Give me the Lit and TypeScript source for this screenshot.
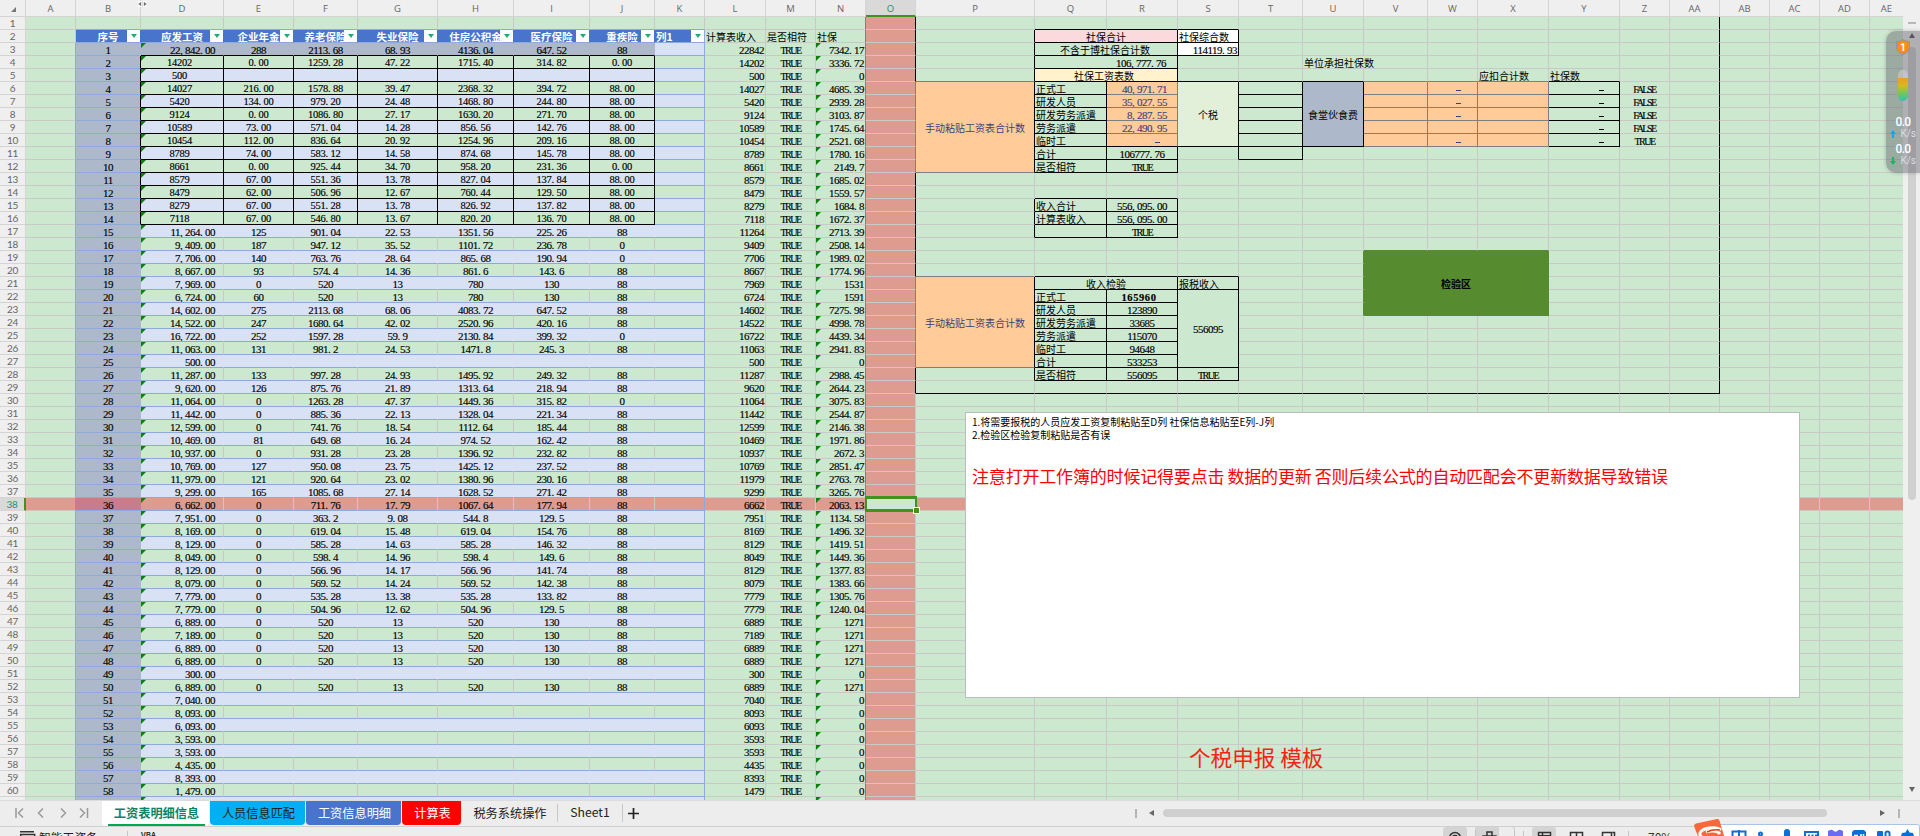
import { LitElement, html, css, svg, nothing } from 'lit';
import { customElement } from 'lit/decorators.js';

const COLS: [string, number][] = [
  ['A', 50], ['B', 65], ['D', 83], ['E', 70], ['F', 64], ['G', 80], ['H', 76], ['I', 76], ['J', 65], ['K', 50],
  ['L', 61], ['M', 50], ['N', 50], ['O', 50], ['P', 119], ['Q', 72], ['R', 71], ['S', 61], ['T', 64], ['U', 61],
  ['V', 64], ['W', 50], ['X', 71], ['Y', 71], ['Z', 50], ['AA', 50], ['AB', 50], ['AC', 50], ['AD', 50], ['AE', 34],
];
const NAMES = COLS.map((c) => c[0]);
const ci = (n: string) => NAMES.indexOf(n);
const LAST_ROW = 61;

// D | E F G H I J | N
const PAYROLL = `22,842.00|288 2113.68 68.93 4136.04 647.52 88|7342.17
14202|0.00 1259.28 47.22 1715.40 314.82 0.00|3336.72
500||0
14027|216.00 1578.88 39.47 2368.32 394.72 88.00|4685.39
5420|134.00 979.20 24.48 1468.80 244.80 88.00|2939.28
9124|0.00 1086.80 27.17 1630.20 271.70 88.00|3103.87
10589|73.00 571.04 14.28 856.56 142.76 88.00|1745.64
10454|112.00 836.64 20.92 1254.96 209.16 88.00|2521.68
8789|74.00 583.12 14.58 874.68 145.78 88.00|1780.16
8661|0.00 925.44 34.70 958.20 231.36 0.00|2149.7
8579|67.00 551.36 13.78 827.04 137.84 88.00|1685.02
8479|62.00 506.96 12.67 760.44 129.50 88.00|1559.57
8279|67.00 551.28 13.78 826.92 137.82 88.00|1684.8
7118|67.00 546.80 13.67 820.20 136.70 88.00|1672.37
11,264.00|125 901.04 22.53 1351.56 225.26 88|2713.39
9,409.00|187 947.12 35.52 1101.72 236.78 0|2508.14
7,706.00|140 763.76 28.64 865.68 190.94 0|1989.02
8,667.00|93 574.4 14.36 861.6 143.6 88|1774.96
7,969.00|0 520 13 780 130 88|1531
6,724.00|60 520 13 780 130 88|1591
14,602.00|275 2113.68 68.06 4083.72 647.52 88|7275.98
14,522.00|247 1680.64 42.02 2520.96 420.16 88|4998.78
16,722.00|252 1597.28 59.9 2130.84 399.32 0|4439.34
11,063.00|131 981.2 24.53 1471.8 245.3 88|2941.83
500.00||0
11,287.00|133 997.28 24.93 1495.92 249.32 88|2988.45
9,620.00|126 875.76 21.89 1313.64 218.94 88|2644.23
11,064.00|0 1263.28 47.37 1449.36 315.82 0|3075.83
11,442.00|0 885.36 22.13 1328.04 221.34 88|2544.87
12,599.00|0 741.76 18.54 1112.64 185.44 88|2146.38
10,469.00|81 649.68 16.24 974.52 162.42 88|1971.86
10,937.00|0 931.28 23.28 1396.92 232.82 88|2672.3
10,769.00|127 950.08 23.75 1425.12 237.52 88|2851.47
11,979.00|121 920.64 23.02 1380.96 230.16 88|2763.78
9,299.00|165 1085.68 27.14 1628.52 271.42 88|3265.76
6,662.00|0 711.76 17.79 1067.64 177.94 88|2063.13
7,951.00|0 363.2 9.08 544.8 129.5 88|1134.58
8,169.00|0 619.04 15.48 619.04 154.76 88|1496.32
8,129.00|0 585.28 14.63 585.28 146.32 88|1419.51
8,049.00|0 598.4 14.96 598.4 149.6 88|1449.36
8,129.00|0 566.96 14.17 566.96 141.74 88|1377.83
8,079.00|0 569.52 14.24 569.52 142.38 88|1383.66
7,779.00|0 535.28 13.38 535.28 133.82 88|1305.76
7,779.00|0 504.96 12.62 504.96 129.5 88|1240.04
6,889.00|0 520 13 520 130 88|1271
7,189.00|0 520 13 520 130 88|1271
6,889.00|0 520 13 520 130 88|1271
6,889.00|0 520 13 520 130 88|1271
300.00||0
6,889.00|0 520 13 520 130 88|1271
7,040.00||0
8,093.00||0
6,093.00||0
3,593.00||0
3,593.00||0
4,435.00||0
8,393.00||0
1,479.00||0`.split('\n').map((l) => l.split('|'));

interface Cell {
  bg: string; r: string; b: string; text?: string; align?: string; color?: string;
  cls?: string; rs?: number; cs?: number; tri?: boolean; filter?: boolean; hidden?: boolean; indent?: number;
}

const GREEN = '#cce8cf', GRID = '#c9c9c9', LINE = '#8ea9db', BAND = '#d9e1f4', STEEL = '#adb9ca';
const RED = '#dd9c8f', ORANGE = '#ffcc99', GRAY = '#7f7f7f', BLACK = '#000', PLUM = '#3f3f76';

function buildSheet(): Cell[][] {
  const g: Cell[][] = [];
  for (let r = 0; r <= LAST_ROW; r++) g.push(COLS.map(() => ({ bg: GREEN, r: GRID, b: GRID })));
  const at = (n: string, r: number) => g[r][ci(n)];
  const span = (a: string, b: string) => NAMES.slice(ci(a), ci(b) + 1);
  const put = (n: string, r: number, text: string, o: Partial<Cell> = {}) => Object.assign(at(n, r), { text, ...o });
  const frame = (a: string, r1: number, b: string, r2: number, color: string) => {
    for (let r = r1 - 1; r <= r2; r++)
      for (let c = ci(a) - 1; c <= ci(b); c++) {
        if (r >= r1) g[r][c].r = color;
        if (c >= ci(a)) g[r][c].b = color;
      }
  };
  const merge = (a: string, r1: number, b: string, r2: number) => {
    const end = at(b, r2);
    for (let r = r1; r <= r2; r++) for (const n of span(a, b)) at(n, r).hidden = true;
    Object.assign(at(a, r1), { hidden: false, rs: r2 - r1 + 1, cs: ci(b) - ci(a) + 1, r: end.r, b: end.b });
  };

  // payroll table
  const heads = ['序号', '应发工资', '企业年金', '养老保险', '失业保险', '住房公积金', '医疗保险', '重疾险', '列1'];
  span('B', 'K').forEach((n, i) => {
    put(n, 2, heads[i], { bg: '#4874cb', r: '#4874cb', b: LINE, color: '#fff', cls: 'head', filter: true, align: n === 'K' ? 'left' : 'center' });
    at(n, 1).b = LINE;
  });
  at('K', 2).r = LINE;
  for (let r = 3; r <= LAST_ROW; r++) {
    const odd = r % 2 === 1;
    for (const n of span('B', 'K')) {
      const c = at(n, r);
      c.bg = n === 'B' || (r === 3 && n !== 'K') ? STEEL : odd ? BAND : GREEN;
      c.b = LINE;
      c.r = n === 'K' ? LINE : n === 'B' || odd ? c.bg : GRID;
    }
    at('A', r).r = LINE;
    at('D', r).tri = at('N', r).tri = true;
    const d = PAYROLL[r - 3];
    if (!d) continue;
    const pasted = r >= 4 && r <= 16;
    put('B', r, String(r - 2), { align: 'center' });
    put('D', r, d[0], pasted ? { align: 'center', cls: 'small', indent: 5 } : { align: 'right', indent: 8 });
    if (d[1]) d[1].split(' ').forEach((v, i) => put(NAMES[ci('E') + i], r, v, { align: 'center', cls: pasted ? 'small' : '' }));
    put('L', r, d[0].replace(',', '').replace('.00', ''), { align: 'right', indent: 1 });
    put('M', r, 'TRUE', { align: 'center' });
    put('N', r, d[2], { align: 'right', indent: 1 });
  }
  frame('D', 4, 'J', 16, BLACK);
  put('L', 2, '计算表收入', { align: 'left' });
  put('M', 2, '是否相符', { align: 'left' });
  put('N', 2, '社保', { align: 'left' });

  // highlighted row and column
  for (const c of g[38]) c.bg = RED;
  Object.assign(at('B', 38), { bg: '#c87c8c', r: '#c87c8c' });
  at('A', 38).r = '#c87c8c';
  for (let r = 1; r <= LAST_ROW; r++) {
    Object.assign(at('O', r), { bg: RED, r: GRID });
    at('N', r).r = '#36a873';
  }
  at('O', 38).bg = GREEN;

  // outer border of the check area
  for (let r = 1; r <= 29; r++) at('O', r).r = at('AA', r).r = BLACK;
  for (const n of span('P', 'AA')) at(n, 29).b = BLACK;

  // social insurance totals
  frame('P', 6, 'P', 12, GRAY);
  frame('Q', 2, 'R', 5, BLACK);
  frame('R', 6, 'R', 10, GRAY);
  frame('Q', 6, 'Q', 12, BLACK);
  frame('R', 11, 'R', 12, BLACK);
  frame('S', 2, 'S', 3, BLACK);
  for (let r = 6; r <= 10; r++) at('R', r).r = GRAY;
  for (let r = 6; r <= 12; r++) if (r !== 12) at('P', r).b = ORANGE;
  at('R', 5).b = at('S', 5).b = BLACK;
  at('S', 10).b = BLACK;
  frame('V', 6, 'X', 10, GRAY);
  frame('T', 6, 'T', 11, BLACK);
  frame('U', 6, 'U', 10, BLACK);
  frame('Y', 6, 'Y', 10, BLACK);
  for (let r = 6; r <= 10; r++) at('X', r).r = GRAY;
  put('Q', 2, '社保合计', { bg: '#fadadd', align: 'center' });
  put('Q', 3, '不含于博社保合计数', { align: 'center', indent: 2 });
  put('Q', 4, '106,777.76', { align: 'right', indent: 11 });
  put('Q', 5, '社保工资表数', { bg: '#fff2cc', align: 'center', indent: 4 });
  for (let r = 2; r <= 5; r++) merge('Q', r, 'R', r);
  put('S', 2, '社保综合数', { bg: '#fff', align: 'left' });
  put('S', 3, '114119.93', { bg: '#fff', align: 'right', indent: 1 });
  const kinds = ['正式工', '研发人员', '研发劳务派遣', '劳务派遣', '临时工', '合计', '是否相符'];
  kinds.forEach((k, i) => {
    put('Q', 6 + i, k, { align: 'left' });
    put('Q', 22 + i, k, { align: 'left' });
  });
  ['40,971.71', '35,027.55', '8,287.55', '22,490.95', '-'].forEach((v, i) =>
    put('R', 6 + i, v, { bg: ORANGE, color: PLUM, align: 'right', indent: v === '-' ? 17 : 10 }));
  put('R', 11, '106777.76', { align: 'center' });
  put('R', 12, 'TRUE', { align: 'center' });
  put('P', 6, '手动粘贴工资表合计数', { bg: ORANGE, color: PLUM, align: 'center', cls: 'mid' });
  merge('P', 6, 'P', 12);
  put('S', 6, '个税', { bg: '#e2f0d9', align: 'center', cls: 'mid' });
  merge('S', 6, 'S', 10);
  put('U', 6, '食堂伙食费', { bg: STEEL, align: 'center', cls: 'mid' });
  merge('U', 6, 'U', 10);
  put('U', 4, '单位承担社保数', { align: 'left', cls: 'spill', r: GREEN });
  put('X', 5, '应扣合计数', { align: 'left' });
  put('Y', 5, '社保数', { align: 'left' });
  for (let r = 6; r <= 10; r++) {
    for (const n of span('V', 'X')) at(n, r).bg = ORANGE;
    if (r !== 9) put('W', r, '-', { align: 'right', indent: 16, color: PLUM });
    put('Y', r, '-', { align: 'right', indent: 15 });
    put('Z', r, r === 10 ? 'TRUE' : 'FALSE', { align: 'center' });
  }

  // income totals
  frame('Q', 15, 'R', 17, BLACK);
  put('Q', 15, '收入合计', { align: 'left' });
  put('Q', 16, '计算表收入', { align: 'left' });
  put('R', 15, '556,095.00', { align: 'center' });
  put('R', 16, '556,095.00', { align: 'center' });
  put('R', 17, 'TRUE', { align: 'center' });

  // income check
  frame('P', 21, 'P', 27, GRAY);
  frame('Q', 21, 'S', 28, BLACK);
  put('P', 21, '手动粘贴工资表合计数', { bg: ORANGE, color: PLUM, align: 'center', cls: 'mid' });
  merge('P', 21, 'P', 27);
  put('Q', 21, '收入检验', { align: 'center' });
  merge('Q', 21, 'R', 21);
  ['165960', '123890', '33685', '115070', '94648', '533253', '556095'].forEach((v, i) =>
    put('R', 22 + i, v, { align: 'center', cls: i === 0 ? 'strong wide' : '', indent: i === 0 ? 6 : 0 }));
  put('S', 21, '报税收入', { align: 'left' });
  put('S', 22, '556095', { align: 'center', cls: 'mid' });
  merge('S', 22, 'S', 27);
  put('S', 28, 'TRUE', { align: 'center' });

  const zone = '#568c2f';
  for (const n of span('V', 'X')) at(n, 18).b = zone;
  for (let r = 19; r <= 23; r++) at('U', r).r = zone;
  Object.assign(at('X', 23), { r: zone, b: zone });
  put('V', 19, '检验区', { bg: zone, align: 'center', cls: 'mid strong' });
  merge('V', 19, 'X', 23);
  return g;
}

const SHEET = buildSheet();

function glyphs(t: string) {
  if (/^(TRUE|FALSE)$/.test(t)) return html`<span class="bool">${t}</span>`;
  if (t === '-') return html`<span class="dash"></span>`;
  if (/^[\d.,]+$/.test(t))
    return html`<span class="num">${t.split(/([.,])/).map((p) => (/[.,]/.test(p) ? html`<i>${p}</i>` : p))}</span>`;
  return html`<span class="cjk">${t}</span>`;
}

@customElement('sheet-grid')
class SheetGrid extends LitElement {
  static styles = css`
    :host { display: block; width: 1903px; height: 800px; overflow: hidden; position: relative; background: #cce8cf; }
    .grid { display: grid; grid-template-rows: 17px; grid-auto-rows: 13px; font-family: "Liberation Serif", "Noto Sans CJK SC", serif; color: #000; }
    .cell { box-sizing: border-box; border-right: 1px solid; border-bottom: 1px solid; display: flex; overflow: hidden; position: relative; white-space: nowrap; line-height: 14px; min-width: 0; }
    .left { justify-content: flex-start; padding-left: 1px; }
    .right { justify-content: flex-end; }
    .center { justify-content: center; }
    .mid { align-items: center; z-index: 1; padding-top: 2px; }
    .spill { overflow: visible; z-index: 2; }
    .num { font-size: 11px; letter-spacing: -0.5px; line-height: 15px; -webkit-text-stroke: 0.15px currentColor; }
    .num i { font-style: normal; display: inline-block; width: 5px; letter-spacing: 0; }
    .small .num { font-size: 10.5px; letter-spacing: -0.25px; line-height: 14px; }
    .bool { font-size: 10px; letter-spacing: -1.5px; line-height: 15px; -webkit-text-stroke: 0.15px currentColor; }
    .dash { width: 5px; height: 1px; margin-top: 8px; background: currentColor; }
    .cjk { font: 10px/14px "Noto Sans CJK SC", sans-serif; }
    .head .cjk { font-size: 10.5px; font-weight: 700; }
    .strong .num, .strong .cjk { font-weight: 700; letter-spacing: 0; }
    .wide .num { font-size: 10.5px; letter-spacing: 0.6px; }
    .tri::before { content: ""; position: absolute; left: 0; top: 0; border-style: solid; border-width: 5px 5px 0 0; border-color: #0a8011 transparent transparent; }
    .filter { position: absolute; right: 0; top: 0; width: 13px; height: 12px; background: #fff; display: grid; place-items: center; }
    .filter::after { content: ""; border-style: solid; border-width: 4px 3px 0; border-color: #1fae70 transparent transparent; }
    .colh, .rowh { box-sizing: border-box; background: #efefef; color: #666; font: 10px/18px "Open Sans", sans-serif; text-align: center; border-right: 1px solid #d4d4d4; border-bottom: 1px solid #d4d4d4; }
    .colh { font-size: 9.5px; }
    .rowh { font: 10px/13px Lato, sans-serif; overflow: hidden; letter-spacing: -0.4px; }
    .corner { display: flex; justify-content: flex-end; align-items: flex-end; padding: 0 9px 4px 0; }
    .corner::after { content: ""; border-style: solid; border-width: 0 0 5px 5px; border-color: transparent transparent #777; }
    .colh.on { background: #d9d9d9; color: #1d8f6b; border-bottom: 2px solid #43921f; }
    .rowh.on { background: #d9d9d9; color: #1d8f6b; border-right: 2px solid #43921f; }
    .unhide { position: absolute; left: 138px; top: 1px; width: 9px; height: 6px; background: #fff; border-radius: 1px; z-index: 3; }
    .unhide svg { display: block; }
    .cursor { position: absolute; left: 865px; top: 496px; width: 52px; height: 16px; box-sizing: border-box; border: 3px solid #43921f; border-width: 3px 2px; z-index: 3; }
    .cursor::after { content: ""; position: absolute; right: -4px; bottom: -4px; width: 5px; height: 5px; background: #43921f; outline: 1px solid #fff; }
    .note { position: absolute; left: 965px; top: 412px; width: 835px; height: 286px; box-sizing: border-box; border: 1px solid #b9bdbb; background: #fff; z-index: 4; padding: 2px 6px; color: #000; font: 10px/13px "Noto Sans CJK SC", sans-serif; white-space: nowrap; }
    .note p { margin: 0; }
    .note .warn { color: #f00; font-size: 17px; line-height: 24px; margin-top: 23px; word-spacing: -0.5px; letter-spacing: -0.18px; }
    .label { position: absolute; left: 1189px; top: 742px; font: 21.6px/30px "Noto Sans CJK SC", sans-serif; color: #f5230f; z-index: 4; white-space: nowrap; }
  `;
  render() {
    const tpl = '26px ' + COLS.map((c) => c[1] + 'px').join(' ');
    return html`
      <div class="grid" style="grid-template-columns:${tpl}">
        <div class="colh corner"></div>
        ${COLS.map(([n]) => html`<div class="colh ${n === 'O' ? 'on' : ''}">${n}</div>`)}
        ${SHEET.slice(1).map((row, i) => html`
          <div class="rowh ${i === 37 ? 'on' : ''}" style="grid-area:${i + 2}/1">${i + 1}</div>
          ${row.map((c, j) => c.hidden ? nothing : html`<div
            class="cell ${c.align ?? ''} ${c.cls ?? ''} ${c.tri ? 'tri' : ''}"
            style="grid-area:${i + 2}/${j + 2}/span ${c.rs ?? 1}/span ${c.cs ?? 1};background:${c.bg};border-right-color:${c.r};border-bottom-color:${c.b};${c.color ? `color:${c.color};` : ''}${c.indent ? `padding-right:${c.indent}px` : ''}"
          >${c.text ? glyphs(c.text) : nothing}${c.filter ? html`<span class="filter"></span>` : nothing}</div>`)}`)}
      </div>
      <div class="unhide"><svg width="9" height="6"><path d="M3 1v4L.5 3zM6 1v4l2.5-2zM4.5 0v6" fill="#666" stroke="#999" stroke-width=".4"/></svg></div>
      <div class="cursor"></div>
      <div class="note">
        <p>1.将需要报税的人员应发工资复制粘贴至D列 社保信息粘贴至E列-J列</p>
        <p>2.检验区检验复制粘贴是否有误</p>
        <p class="warn">注意打开工作簿的时候记得要点击 数据的更新 否则后续公式的自动匹配会不更新数据导致错误</p>
      </div>
      <div class="label">个税申报 模板</div>`;
  }
}

@customElement('net-widget')
class NetWidget extends LitElement {
  static styles = css`
    :host { position: absolute; left: 1886px; top: 31px; width: 34px; height: 142px; box-sizing: border-box; background: rgba(90, 90, 102, 0.43); border-radius: 10px 0 0 10px; z-index: 10; box-shadow: 0 0 4px rgba(0, 0, 0, 0.2); display: flex; flex-direction: column; align-items: center; padding-top: 8px; font-family: Roboto, sans-serif; color: #fff; overflow: hidden; }
    .pill { flex: none; width: 10px; height: 31px; border-radius: 5px; margin: 15px 0 14px; background: linear-gradient(rgba(255,255,255,.25) 8px, #f09a28 8px, #d8b820 16px, #7cc850 22px, #2fc0b8 31px); }
    .v { font-size: 12px; line-height: 14px; font-weight: 500; letter-spacing: -0.6px; }
    .u { font-size: 10px; line-height: 9px; color: #dcdce2; display: flex; gap: 4px; align-items: center; margin-bottom: 4px; align-self: flex-end; padding-right: 4px; }
    svg { display: block; flex: none; }
  `;
  render() {
    const arrow = (d: string, f: string) => svg`<svg width="6" height="8"><path d=${d} fill=${f}/></svg>`;
    return html`
      <svg width="14" height="16"><path d="M7 .6c2 1.3 4 1.8 6.3 1.9v6c0 3.4-3 5.6-6.3 7C3.7 14.1.7 11.9.7 8.5v-6C3 2.4 5 1.9 7 .6z" fill="#fb8c16" stroke="#8b8fb0"/><text x="7" y="12" text-anchor="middle" font-size="10.5" font-weight="700" fill="#fff">1</text></svg>
      <div class="pill"></div>
      <div class="v">0.0</div>
      <div class="u">${arrow('M3 0l3 4H4v4H2V4H0z', '#12a5f4')}<span>K/s</span></div>
      <div class="v">0.0</div>
      <div class="u">${arrow('M3 8l3-4H4V0H2v4H0z', '#13b866')}<span>K/s</span></div>`;
  }
}

@customElement('sheet-tabs')
class SheetTabs extends LitElement {
  static styles = css`
    :host { display: flex; box-sizing: border-box; height: 27px; background: #ededed; border-top: 1px solid #dcdcdc; border-bottom: 1px solid #cfcfcf; font: 12px/22px "Noto Sans CJK SC", sans-serif; color: #222; align-items: flex-start; }
    .nav { width: 102px; height: 25px; box-sizing: border-box; padding: 6px 0 0 14px; flex: none; }
    .nav svg { display: block; }
    .tab { box-sizing: border-box; height: 24px; text-align: center; border-radius: 0 0 4px 4px; white-space: nowrap; padding: 1px 0 0 2px; flex: none; font-size: 12.2px; }
    .active { width: 107px; margin-right: 1px; background: #fff; color: #0c8368; font-weight: 700; height: 25px; display: flex; flex-direction: column; align-items: center; }
    .active::after { content: ""; width: 97px; height: 2px; background: #00a651; }
    .cyan { width: 95px; margin-right: 1px; background: #00b0f0; }
    .blue { width: 95px; margin-right: 1px; background: #4874cb; color: #fff; }
    .red { width: 59px; background: #f00; color: #fff; }
    .plain { width: 96px; }
    .s1 { width: 66px; border: solid #c8c8c8; border-width: 0 1px; border-radius: 0; height: 18px; line-height: 17px; margin-top: 3px; padding: 0; }
    .plus { margin: 7px 0 0 5px; flex: none; }
    .hbar { margin: 7px 0 0 496px; display: flex; align-items: center; height: 10px; }
    .tick { width: 2px; height: 9px; background: #b5b5b5; }
    .lt { border: solid transparent; border-width: 3px 5px 3px 0; border-right-color: #666; margin: 0 9px 0 12px; }
    .track { width: 664px; height: 8px; border-radius: 4px; background: #cfcfcf; }
    .rt { border: solid transparent; border-width: 3px 0 3px 5px; border-left-color: #666; margin: 0 13px 0 53px; }
  `;
  render() {
    return html`
      <div class="nav"><svg width="76" height="12" fill="none" stroke="#999" stroke-width="1.5"><path d="M2 1v10M9 1.5L4.5 6 9 10.5M29 1.5L24.5 6l4.5 4.5M47 1.5L51.5 6 47 10.5M66 1.5L70.5 6 66 10.5M73.5 1v10"/></svg></div>
      <div class="tab active">工资表明细信息</div>
      <div class="tab cyan">人员信息匹配</div>
      <div class="tab blue">工资信息明细</div>
      <div class="tab red">计算表</div>
      <div class="tab plain">税务系统操作</div>
      <div class="tab s1">Sheet1</div>
      <svg class="plus" width="11" height="11"><path d="M5.5 0v11M0 5.5h11" stroke="#222" stroke-width="1.7"/></svg>
      <div class="hbar"><span class="tick"></span><span class="lt"></span><span class="track"></span><span class="rt"></span><span class="tick"></span></div>`;
  }
}

@customElement('ime-bar')
class ImeBar extends LitElement {
  static styles = css`
    :host { position: absolute; left: 1690px; top: 818px; width: 230px; height: 18px; overflow: hidden; z-index: 5; }
    svg { display: block; }
  `;
  render() {
    return html`<svg width="230" height="18" viewBox="1690 818 230 18" fill="none" stroke="#0a6fd6" stroke-width="2">
      <rect x="1700" y="824.5" width="219.5" height="30" rx="2" fill="#fff" stroke="#a9c4e6" stroke-width="1"/>
      <path d="M1694 826q0-2 2-2.5l21-4.5q2-.4 2.5 1.5l5 17h-26z" fill="#f9683a" stroke="none"/>
      <path d="M1721 830c-5-4-19-2.5-21 3-.8 3 2 5 6 5M1706 832c5-2 12-1 14 2" stroke="#fff" stroke-width="3"/>
      <path d="M1707 832q6-3 13-2" stroke="#e0401a" stroke-width="1.5"/>
      <path d="M1732.5 836v-4.5h13v4.500M1739 830v7"/>
      <circle cx="1760.5" cy="834" r="1.5"/>
      <path d="M1787 838v-6" stroke-width="6" stroke-linecap="round"/>
      <path d="M1805 837v-5h13v5"/>
      <path d="M1808 835.5h9" stroke-dasharray="2 1.5"/>
      <path d="M1828 831q4-2 4.5-1 3 3.5 6 0 .5-1 4.5 1v7h-15z" fill="#6a6cf5" stroke="none"/>
      <path d="M1852 838v-6l2-2h10l2 2v6z" fill="#0a6fd6" stroke="none"/><path d="M1854 835.500h4M1861 834v3M1863.500 834v3" stroke="#fff" stroke-width="1.500"/>
      <rect x="1877" y="831" width="6" height="6" rx="1" fill="#0a6fd6" stroke="none"/><rect x="1885.5" y="831.5" width="4" height="6" rx="2"/>
      <path d="M1901 836l1-3 3.500-.5 2-3.500 2 3.500 3.500.5 1 3z" fill="#0a6fd6" stroke="none"/>
    </svg>`;
  }
}

@customElement('app-root')
class AppRoot extends LitElement {
  static styles = css`
    :host { display: flex; flex-direction: column; width: 1920px; height: 836px; overflow: hidden; position: relative; background: #ededed; }
    .main { display: flex; height: 800px; }
    .vbar { width: 17px; background: #efefef; display: flex; flex-direction: column; align-items: center; }
    .split { width: 8px; height: 2px; background: #b8b8b8; margin-top: 22px; }
    .up { border: solid transparent; border-width: 0 3px 5px; border-bottom-color: #555; margin: 9px 0; }
    .thumb { width: 8px; height: 453px; background: #d0d0d0; border-radius: 4px; }
    .down { border: solid transparent; border-width: 5px 3px 0; border-top-color: #666; margin-top: auto; margin-bottom: 8px; }
    .status { height: 9px; overflow: hidden; background: #ededed; }
    .status svg { display: block; }
    text { font-family: "Noto Sans CJK SC", sans-serif; }
  `;
  render() {
    return html`
      <div class="main">
        <sheet-grid></sheet-grid>
        <div class="vbar"><span class="split"></span><span class="up"></span><span class="thumb"></span><span class="down"></span></div>
      </div>
      <sheet-tabs></sheet-tabs>
      <div class="status">
        <svg width="1920" height="9" viewBox="0 827 1920 9" fill="none" stroke="#333" stroke-width="1.5">
          <path d="M20 831.8h14M20.700 840v-5.500h14v5.500M25 836.500v2M29 836.500v2" />
          <text x="39" y="842" font-size="11.8" fill="#222" stroke="none">智能工资条</text>
          <path d="M127.5 831v6M1523.5 831v6M1628.5 831v6" stroke="#c4c4c4" stroke-width="1"/>
          <text x="141" y="838" font-size="8" font-weight="700" textLength="15" lengthAdjust="spacingAndGlyphs" fill="#333" stroke="none">VBA</text>
          <rect x="1443" y="827" width="24" height="14" rx="3" fill="#d4d4d4" stroke="none"/>
          <circle cx="1455" cy="838" r="5.5"/><circle cx="1455" cy="838" r="2.5"/>
          <rect x="1475.5" y="826.5" width="39" height="14" rx="3" stroke="#c4c4c4" stroke-width="1"/>
          <rect x="1476" y="827" width="23" height="13" fill="#d4d4d4" stroke="none"/>
          <path d="M1487 836v-4h5v4M1483 840v-4h13v4"/>
          <rect x="1532" y="827" width="24" height="14" rx="3" fill="#d4d4d4" stroke="none"/>
          <path d="M1538.5 840v-7.500h12v7.500M1542.500 833v8M1538.500 835.800h12M1570.500 840v-7.500h12v7.500M1576.500 833v8M1602.500 840v-7.500h9v7.500M1614.500 840v-7.500h-2"/>
          <text x="1648" y="842" font-size="12" fill="#333" stroke="none">70%</text>
        </svg>
      </div>
      <ime-bar></ime-bar>
      <net-widget></net-widget>`;
  }
}
